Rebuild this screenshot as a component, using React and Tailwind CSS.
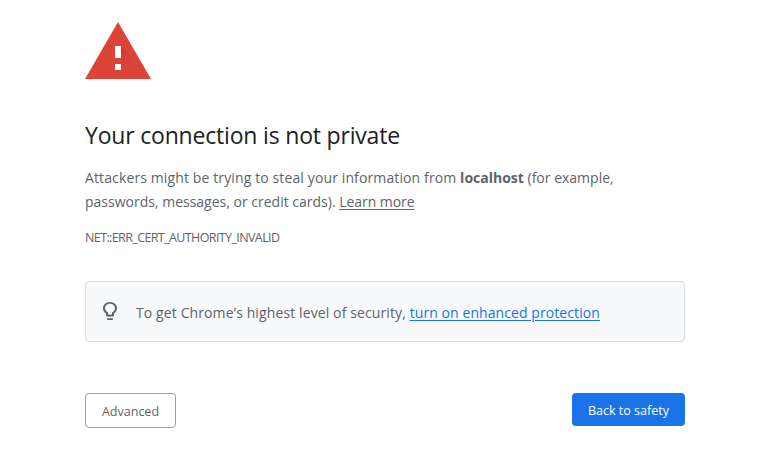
function WarningIcon() {
  return (
    <svg className="block h-[57px] w-[66px]" viewBox="0 0 66 57" aria-hidden="true">
      <defs>
        <linearGradient id="shade" x1="32" y1="28" x2="48" y2="44" gradientUnits="userSpaceOnUse">
          <stop offset="0" stopColor="#a52714" stopOpacity="0.4" />
          <stop offset="1" stopColor="#db4437" stopOpacity="0" />
        </linearGradient>
      </defs>
      <path d="M33 0 66 57H0Z" fill="#db4437" />
      <path d="M36 24 57 45 62 57H39L30 48 36 42Z" fill="url(#shade)" />
      <path d="M30 24h6v12h-6zM30 42h6v6h-6z" fill="#fff" />
    </svg>
  );
}

function BulbIcon() {
  return (
    <svg className="mb-[2px] block h-[18px] w-[14px] shrink-0" viewBox="5 2 14 20" preserveAspectRatio="none" fill="#5f6368" aria-hidden="true">
      <path d="M9 21c0 .55.45 1 1 1h4c.55 0 1-.45 1-1v-1H9v1zm3-19C8.14 2 5 5.14 5 9c0 2.38 1.19 4.47 3 5.74V17c0 .55.45 1 1 1h6c.55 0 1-.45 1-1v-2.26c1.81-1.27 3-3.36 3-5.74 0-3.86-3.14-7-7-7zm2.85 11.1-.85.6V16h-4v-2.3l-.85-.6A4.997 4.997 0 0 1 7 9c0-2.76 2.24-5 5-5s5 2.24 5 5c0 1.63-.8 3.16-2.15 4.1z" />
    </svg>
  );
}

export default function App() {
  return (
    <main className="h-[469px] w-full overflow-hidden bg-white pl-[85px] pt-[22px] font-['Open_Sans','Noto_Sans',sans-serif] text-[14px] leading-6 text-[#5f6368]">
      <div className="w-[600px]">
        <WarningIcon />
        <h1 className="mt-[42px] whitespace-nowrap text-[23px] leading-[29px] tracking-[-0.19px] text-[#202124]">
          <span>Your connection is not private</span>
        </h1>
        <p className="mt-4 whitespace-nowrap">
          <span className="tracking-[0.12px]">Attackers might be trying to steal your information from </span>
          <strong className="font-bold">localhost</strong>
          <span> (for example,</span>
          <br />
          <span>passwords, messages, or credit cards). </span>
          <a className="tracking-[-0.05px] underline underline-offset-2">Learn more</a>
        </p>
        <div className="mt-3 text-[12.5px] leading-6 tracking-[-0.61px]">
          <span>NET::ERR_CERT_AUTHORITY_INVALID</span>
        </div>
        <div className="mt-[31px] flex h-[61px] items-center rounded-[4px] border border-[#dadce0] bg-[#f8f9fa] pl-[17px]">
          <BulbIcon />
          <p className="ml-[19px] whitespace-nowrap pt-[2px]">
            <span className="tracking-[0.11px]">To get Chrome’s highest level of security, </span>
            <a className="tracking-[0.08px] text-[#1a73e8] underline underline-offset-2">turn on enhanced protection</a>
          </p>
        </div>
        <div className="mt-[51px] flex items-start justify-between text-[12.5px]">
          <button className="h-[35px] w-[91px] rounded-[4px] border border-[#9aa0a6] bg-white pt-[2px]">Advanced</button>
          <button className="h-[33px] w-[113px] rounded-[4px] bg-[#1a73e8] pt-[2px] text-white">Back to safety</button>
        </div>
      </div>
    </main>
  );
}
